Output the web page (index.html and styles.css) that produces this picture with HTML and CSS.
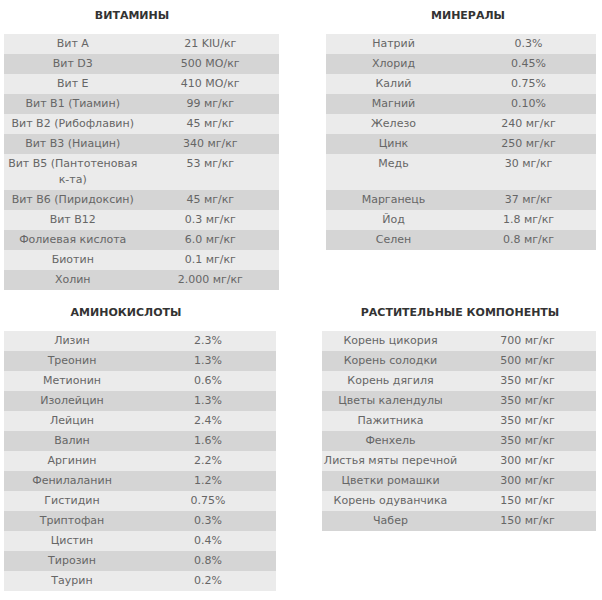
FILE: index.html
```html
<!DOCTYPE html>
<html lang="ru">
<head>
<meta charset="utf-8">
<title>Состав</title>
<link rel="stylesheet" href="styles.css">
</head>
<body>
<div class="page">
  <div class="section">
    <div class="block block-vit">
      <div class="heading heading-vit">ВИТАМИНЫ</div>
      <table class="tbl">
        <tr><td>Вит A</td><td>21 KIU/кг</td></tr>
        <tr><td>Вит D3</td><td>500 МО/кг</td></tr>
        <tr><td>Вит E</td><td>410 МО/кг</td></tr>
        <tr><td>Вит B1 (Тиамин)</td><td>99 мг/кг</td></tr>
        <tr><td>Вит B2 (Рибофлавин)</td><td>45 мг/кг</td></tr>
        <tr><td>Вит B3 (Ниацин)</td><td>340 мг/кг</td></tr>
        <tr><td>Вит B5 (Пантотеновая к-та)</td><td>53 мг/кг</td></tr>
        <tr><td>Вит B6 (Пиридоксин)</td><td>45 мг/кг</td></tr>
        <tr><td>Вит B12</td><td>0.3 мг/кг</td></tr>
        <tr><td>Фолиевая кислота</td><td>6.0 мг/кг</td></tr>
        <tr><td>Биотин</td><td>0.1 мг/кг</td></tr>
        <tr><td>Холин</td><td>2.000 мг/кг</td></tr>
      </table>
    </div>
    <div class="block block-min">
      <div class="heading heading-min">МИНЕРАЛЫ</div>
      <table class="tbl">
        <tr><td>Натрий</td><td>0.3%</td></tr>
        <tr><td>Хлорид</td><td>0.45%</td></tr>
        <tr><td>Калий</td><td>0.75%</td></tr>
        <tr><td>Магний</td><td>0.10%</td></tr>
        <tr><td>Железо</td><td>240 мг/кг</td></tr>
        <tr><td>Цинк</td><td>250 мг/кг</td></tr>
        <tr class="tall"><td>Медь</td><td>30 мг/кг</td></tr>
        <tr><td>Марганець</td><td>37 мг/кг</td></tr>
        <tr><td>Йод</td><td>1.8 мг/кг</td></tr>
        <tr><td>Селен</td><td>0.8 мг/кг</td></tr>
      </table>
    </div>
  </div>
  <div class="section section-bottom">
    <div class="block block-amino">
      <div class="heading heading-amino">АМИНОКИСЛОТЫ</div>
      <table class="tbl">
        <tr><td>Лизин</td><td>2.3%</td></tr>
        <tr><td>Треонин</td><td>1.3%</td></tr>
        <tr><td>Метионин</td><td>0.6%</td></tr>
        <tr><td>Изолейцин</td><td>1.3%</td></tr>
        <tr><td>Лейцин</td><td>2.4%</td></tr>
        <tr><td>Валин</td><td>1.6%</td></tr>
        <tr><td>Аргинин</td><td>2.2%</td></tr>
        <tr><td>Фенилаланин</td><td>1.2%</td></tr>
        <tr><td>Гистидин</td><td>0.75%</td></tr>
        <tr><td>Триптофан</td><td>0.3%</td></tr>
        <tr><td>Цистин</td><td>0.4%</td></tr>
        <tr><td>Тирозин</td><td>0.8%</td></tr>
        <tr><td>Таурин</td><td>0.2%</td></tr>
      </table>
    </div>
    <div class="block block-plant">
      <div class="heading heading-plant">РАСТИТЕЛЬНЫЕ КОМПОНЕНТЫ</div>
      <table class="tbl">
        <tr><td>Корень цикория</td><td>700 мг/кг</td></tr>
        <tr><td>Корень солодки</td><td>500 мг/кг</td></tr>
        <tr><td>Корень дягиля</td><td>350 мг/кг</td></tr>
        <tr><td>Цветы календулы</td><td>350 мг/кг</td></tr>
        <tr><td>Пажитника</td><td>350 мг/кг</td></tr>
        <tr><td>Фенхель</td><td>350 мг/кг</td></tr>
        <tr><td>Листья мяты перечной</td><td>300 мг/кг</td></tr>
        <tr><td>Цветки ромашки</td><td>300 мг/кг</td></tr>
        <tr><td>Корень одуванчика</td><td>150 мг/кг</td></tr>
        <tr><td>Чабер</td><td>150 мг/кг</td></tr>
      </table>
    </div>
  </div>
</div>
</body>
</html>
```

FILE: styles.css
```css
html, body {
  margin: 0;
  padding: 0;
  background: #ffffff;
}

.page {
  width: 602px;
  font-family: "DejaVu Sans", Verdana, sans-serif;
  font-size: 11px;
  color: #666666;
}

.section {
  display: flex;
  align-items: flex-start;
}

.section-bottom {
  margin-top: 7px;
}

.block-vit {
  margin-left: 4px;
  width: 275px;
}

.block-min {
  margin-left: 47px;
  width: 270px;
}

.block-amino {
  margin-left: 4px;
  width: 272px;
}

.block-plant {
  margin-left: 46px;
  width: 274px;
}

.heading {
  height: 34px;
  box-sizing: border-box;
  padding-top: 9px;
  line-height: 13px;
  font-weight: bold;
  font-size: 11px;
  color: #333333;
  text-align: center;
  white-space: nowrap;
}

.heading-vit {
  padding-right: 19px;
}

.heading-min {
  padding-left: 14px;
}

.heading-amino {
  padding-right: 28px;
}

.heading-plant {
  padding-left: 2px;
}

.tbl {
  width: 100%;
  border-collapse: collapse;
  table-layout: fixed;
}

.tbl td {
  width: 50%;
  padding: 2px 0;
  line-height: 16px;
  text-align: center;
  vertical-align: top;
}

.tbl tr:nth-child(odd) td {
  background: #ebebeb;
}

.tbl tr:nth-child(even) td {
  background: #d5d5d5;
}

.tbl tr.tall td {
  height: 32px;
}
```
